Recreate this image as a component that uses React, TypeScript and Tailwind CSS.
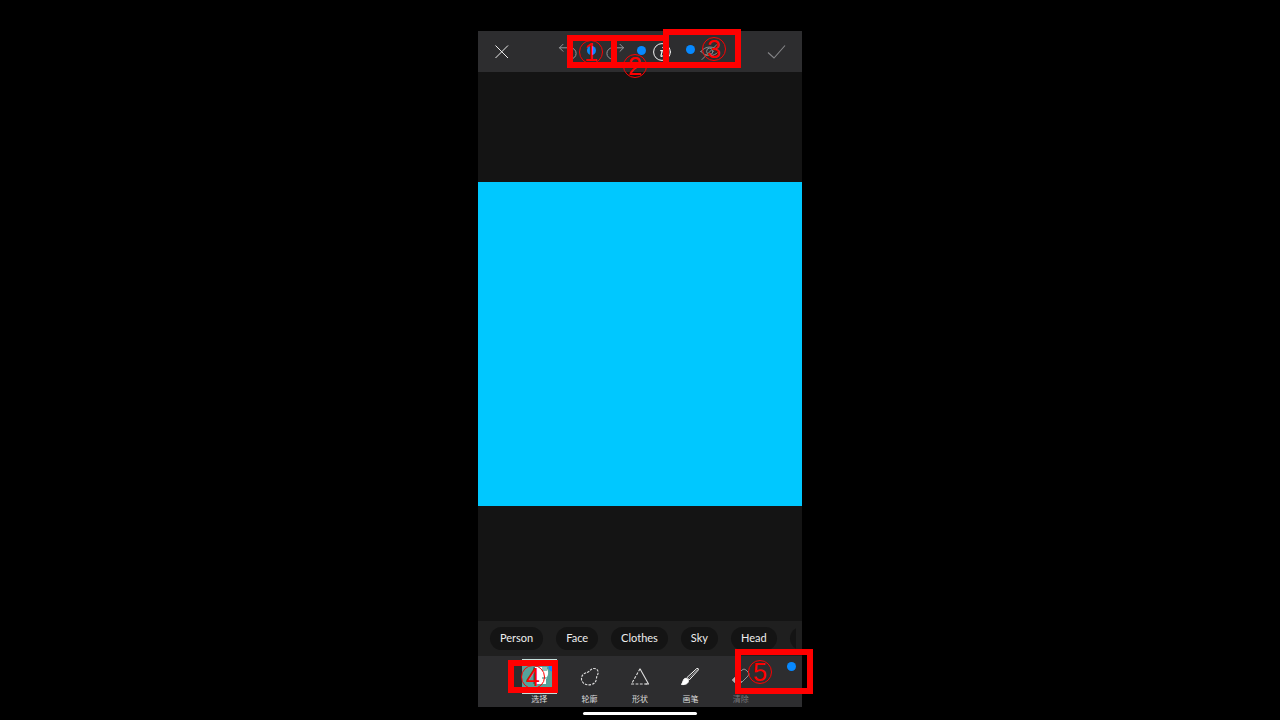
import type { ReactNode } from "react";

const chips = ["Person", "Face", "Clothes", "Sky", "Head"];

function UndoIcon({ flip = false }: { flip?: boolean }) {
  return (
    <svg
      viewBox="0 0 20 20"
      className={flip ? "h-5 w-5 -scale-x-100" : "h-5 w-5"}
      fill="none"
      stroke="#96979a"
      strokeWidth="1"
      strokeLinecap="round"
      strokeLinejoin="round"
    >
      <path d="M5 2.3 1.5 5.8 5 9.3M1.5 5.8H12.5a5.600 5.600 0 0 1 0 11.200H10" />
    </svg>
  );
}

function InfoIcon() {
  return (
    <svg viewBox="0 0 20 20" className="h-5 w-5" fill="none" stroke="#f5f5f5" strokeLinecap="round">
      <circle cx="10" cy="10" r="8.4" strokeWidth="1" />
      <path d="M8.700 8.600h1.600L9 13.600q-.2 1.200 1.400.4" strokeWidth="1.200" />
      <circle cx="11.200" cy="5.600" r=".5" fill="#f5f5f5" />
    </svg>
  );
}

function EyeOffIcon() {
  return (
    <svg viewBox="0 0 20 20" className="h-5 w-5" fill="none" stroke="#8b8c8f" strokeWidth="1" strokeLinecap="round">
      <path d="M2 9.500C6 3.500 15.500 3.500 19.500 9.500C15.500 15 6 15 2 9.500Z" />
      <circle cx="10.800" cy="9.300" r="3.200" />
      <path d="M3 17.500 18.500 2" />
    </svg>
  );
}

function SelectIcon() {
  return (
    <svg viewBox="0 0 35 35" className="h-[35px] w-[35px]">
      <rect width="35" height="35" fill="#55a39b" />
      <path d="M0 .5h35M0 34.500h35" stroke="#c4e0dc" />
      <path d="M11 8h12c4 2 4 9 1 11v6H11Z" fill="#fff" />
      <path d="M20 8h5v4h-5zM20 18h5v2h-5z" fill="#8fc4bc" />
      <path d="M12 8v17" fill="none" stroke="#45747a" strokeWidth="2" />
      <circle cx="31" cy="8" r="4.500" fill="#0789ff" />
    </svg>
  );
}

function OutlineIcon() {
  return (
    <svg viewBox="0 0 20 20" className="h-5 w-5" fill="none" stroke="#dedede" strokeWidth="1.100" strokeDasharray="2.500 1.200">
      <path d="M7 5.500C10 4.800 10.500 1.500 14 1.500C18.500 1.500 19 6 17 9C16 11.500 17 16 11.500 17.500C6 19 1.300 16 1.500 11.500C1.600 8 4 6.200 7 5.500Z" />
    </svg>
  );
}

function ShapeIcon() {
  return (
    <svg viewBox="0 0 20 20" className="h-5 w-5" fill="none" stroke="#dedede" strokeWidth="1.100" strokeLinejoin="round">
      <path d="M10 1.800 1.500 17H18" strokeDasharray="2.800 1.500" />
      <path d="m10 1.800 8.500 15.200h-3" />
    </svg>
  );
}

function BrushIcon() {
  return (
    <svg viewBox="0 0 20 20" className="h-5 w-5" fill="none" stroke="#fff" strokeWidth="1" strokeLinejoin="round">
      <path d="M7 10.500 16.800 1.500Q18.800 1 18.300 3L9.200 13Z" />
      <path d="m8.500 11.500 8.500-8.500" strokeWidth=".4" />
      <path d="M6 11.200c-3 .2-2.500 3-4.500 6.300C5.500 18 8.500 16.500 8.500 13.500Z" fill="#fff" />
    </svg>
  );
}

function EraserIcon() {
  return (
    <svg viewBox="0 0 20 20" className="h-5 w-5" fill="none" stroke="#929295" strokeWidth="1" strokeLinejoin="round">
      <path d="m2 12 9-9q2-2 4 0l2 2q2 2 0 4l-8 8H5l-3-3q-1-1 0-2Z" />
      <path d="m2 12 3-3 6 6-2 2H5l-3-3q-1-1 0-2Z" fill="#b5b5b7" />
    </svg>
  );
}

function Tool({ label, children, muted = false }: { label: string; children: ReactNode; muted?: boolean }) {
  return (
    <button
      className={
        muted
          ? "flex min-w-0 flex-col items-center text-[8px] leading-[12px] text-[#77777a]"
          : "flex min-w-0 flex-col items-center text-[8px] leading-[12px] text-[#dadada]"
      }
    >
      <span className="flex h-[35px] items-center justify-center">{children}</span>
      <span>{label}</span>
    </button>
  );
}

function Dot({ place }: { place: string }) {
  return <span className={`absolute h-[9px] w-[9px] rounded-full bg-[#0789ff] ${place}`} />;
}

function Box({ place }: { place: string }) {
  return <span className={`absolute border-6 border-[#ff0000] ${place}`} />;
}

function Mark({ place, children }: { place: string; children: string }) {
  return (
    <span
      className={`absolute flex h-6 w-6 items-center justify-center rounded-full border border-[#ff0000] text-[25px] leading-6 text-[#ff0000] ${place}`}
    >
      {children}
    </span>
  );
}

export default function App() {
  return (
    <div className="h-screen overflow-hidden bg-black pt-[31px] font-['Liberation_Sans','Noto_Sans_CJK_SC',sans-serif]">
      <div className="relative mx-auto flex h-full w-full max-w-[324px] flex-col">
        <header className="flex h-[41px] shrink-0 items-center justify-between bg-[#2d2d2f] px-4">
          <button aria-label="Close">
            <svg viewBox="0 0 16 16" className="h-4 w-4" fill="none" stroke="#ededed" strokeWidth="1">
              <path d="m1.500 1.500 12.500 12.500m0-12.500-12.500 12.500" />
            </svg>
          </button>
          <div className="flex items-center gap-[27px]">
            <button aria-label="Undo"><UndoIcon /></button>
            <button aria-label="Redo"><UndoIcon flip /></button>
            <button aria-label="Info"><InfoIcon /></button>
            <button aria-label="Hide selection"><EyeOffIcon /></button>
          </div>
          <button aria-label="Apply">
            <svg viewBox="0 0 20 20" className="h-5 w-5" fill="none" stroke="#858588" strokeWidth="1.100">
              <path d="m2 10.500 6 5.500L19 3.500" />
            </svg>
          </button>
        </header>

        <main className="flex min-h-0 flex-1 flex-col justify-center bg-[#141414]">
          <div className="mb-[5px] aspect-square w-full bg-[#00c8ff]" />
        </main>

        <div className="flex h-[35px] shrink-0 items-center bg-[#1f1f1f] px-[6px]">
          <div className="flex w-full gap-[13px] overflow-hidden pl-[6px] font-['Lato',sans-serif] text-[11px] text-[#eeeeee]">
            {chips.map((name) => (
              <button key={name} className="h-[23px] shrink-0 rounded-full bg-[#141414] px-[10px]">
                {name}
              </button>
            ))}
            <button aria-label="More" className="h-[23px] w-12 shrink-0 rounded-full bg-[#141414]" />
          </div>
        </div>

        <nav className="flex h-[51px] shrink-0 items-start justify-center bg-[#2d2d2f] pt-[3px]">
          <div className="grid w-[252px] grid-cols-5">
            <Tool label="选择"><SelectIcon /></Tool>
            <Tool label="轮廓"><OutlineIcon /></Tool>
            <Tool label="形状"><ShapeIcon /></Tool>
            <Tool label="画笔"><BrushIcon /></Tool>
            <Tool label="清除" muted><EraserIcon /></Tool>
          </div>
        </nav>

        <div className="flex h-[13px] shrink-0 items-center justify-center">
          <div className="h-[3px] w-[114px] rounded-full bg-white" />
        </div>

        <div className="pointer-events-none absolute inset-0">
          <Dot place="left-[109px] top-[15px]" />
          <Dot place="left-[159px] top-[15px]" />
          <Dot place="left-[208px] top-[14px]" />
          <Dot place="left-[309px] top-[631px]" />
          <Box place="left-[89px] top-[4px] h-[33px] w-[50px]" />
          <Box place="left-[133px] top-[4px] h-[33px] w-[58px]" />
          <Box place="left-[185px] top-[-2px] h-[39px] w-[78px]" />
          <Box place="left-[30px] top-[629px] h-[33px] w-[50px]" />
          <Box place="left-[257px] top-[618px] h-[45px] w-[78px]" />
          <Mark place="left-[101px] top-[9px]">1</Mark>
          <Mark place="left-[145px] top-[23px]">2</Mark>
          <Mark place="left-[224px] top-[6px]">3</Mark>
          <Mark place="left-[43px] top-[634px]">4</Mark>
          <Mark place="left-[270px] top-[629px]">5</Mark>
        </div>
      </div>
    </div>
  );
}
